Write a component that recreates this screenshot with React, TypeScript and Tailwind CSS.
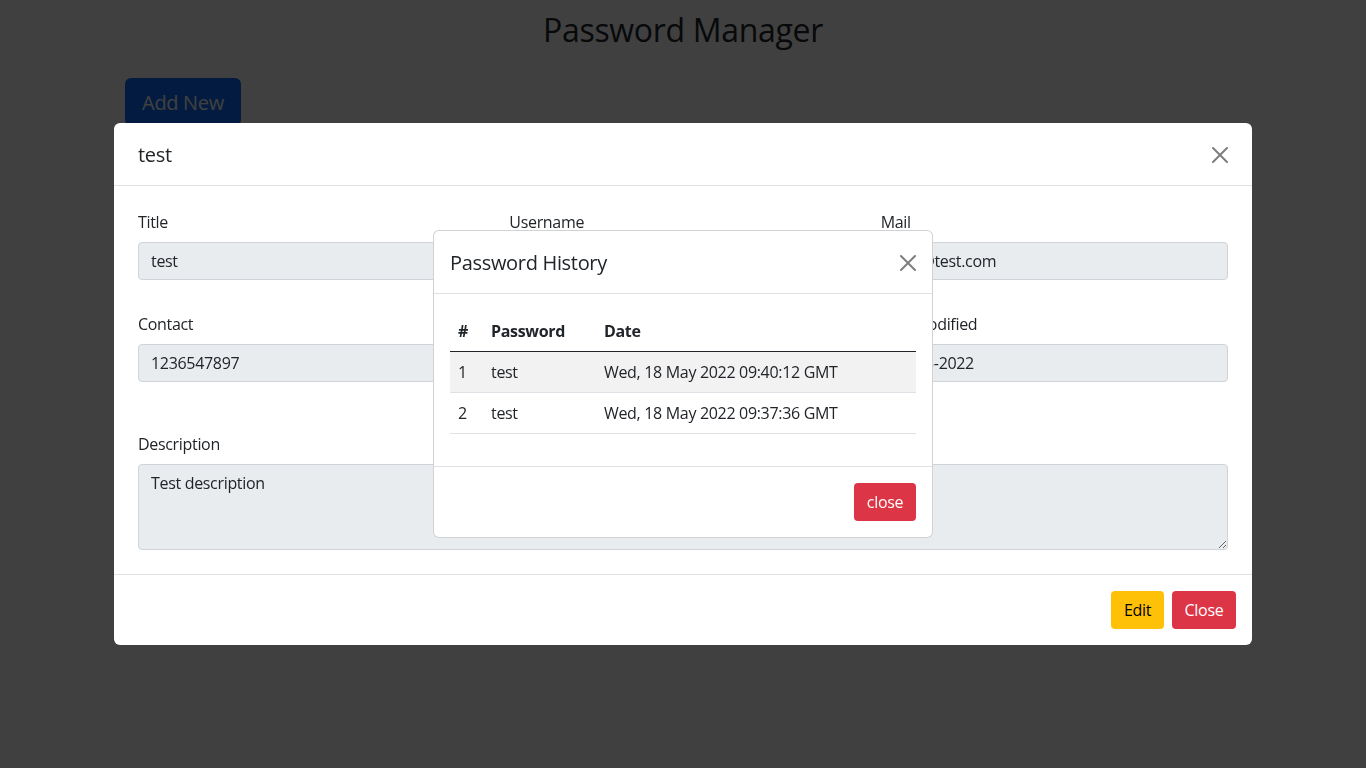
import { useState } from 'react';

const FONT = "font-['Open_Sans','Noto_Sans',sans-serif]";

interface Field {
  label: string;
  value: string;
  type?: string;
}

const FIELD_ROWS: Field[][] = [
  [
    { label: 'Title', value: 'test' },
    { label: 'Username', value: 'test' },
    { label: 'Mail', value: 'test@test.com' },
  ],
  [
    { label: 'Contact', value: '1236547897' },
    { label: 'Password', value: 'test', type: 'password' },
    { label: 'Last Modified', value: '18-05-2022' },
  ],
];

const HISTORY = [
  { id: 1, password: 'test', date: 'Wed, 18 May 2022 09:40:12 GMT' },
  { id: 2, password: 'test', date: 'Wed, 18 May 2022 09:37:36 GMT' },
];

function CloseIcon() {
  return (
    <svg width="16" height="16" viewBox="0 0 16 16" className="opacity-50" fill="#000">
      <path d="M.293.293a1 1 0 0 1 1.414 0L8 6.586 14.293.293a1 1 0 1 1 1.414 1.414L9.414 8l6.293 6.293a1 1 0 0 1-1.414 1.414L8 9.414l-6.293 6.293a1 1 0 0 1-1.414-1.414L6.586 8 .293 1.707a1 1 0 0 1 0-1.414z" />
    </svg>
  );
}

function ReadOnlyInput({ value, type = 'text' }: { value: string; type?: string }) {
  return (
    <input
      readOnly
      type={type}
      value={value}
      className="block w-full h-[38px] px-3 rounded border border-[#ced4da] bg-[#e9ecef] text-base text-[#212529] tracking-[-0.02em] outline-none"
    />
  );
}

export default function App() {
  const [showHistory] = useState(true);

  return (
    <div className={`relative min-h-screen bg-white text-[#212529] tracking-[-0.02em] ${FONT}`}>
      <h2 className="pt-[11px] text-center text-[32px] leading-[38px] font-medium">Password Manager</h2>
      <div className="pl-[125px] mt-[29px]">
        <button type="button" className="w-[116px] h-12 rounded-md bg-[#0d6efd] text-white text-xl pt-0.5">
          Add New
        </button>
      </div>

      <div className="fixed inset-0 bg-black/75" />

      <div className="fixed inset-0 flex items-center justify-center">
        <div className="w-[1138px] bg-white rounded-md">
          <div className="h-[63px] pl-6 pr-6 pt-0.5 flex items-center justify-between border-b border-[#dee2e6]">
            <h5 className="text-xl font-medium leading-[30px]">test</h5>
            <button type="button" className="w-4 h-4 flex items-center justify-center">
              <CloseIcon />
            </button>
          </div>

          <div className="px-6 pt-6 pb-6">
            <div className="flex flex-col gap-8">
              {FIELD_ROWS.map((row, rowIndex) => (
                <div key={rowIndex} className="grid grid-cols-3 gap-x-6">
                  {row.map((field) => (
                    <div key={field.label}>
                      <label className="block mb-2 leading-6">{field.label}</label>
                      <ReadOnlyInput value={field.value} type={field.type} />
                    </div>
                  ))}
                </div>
              ))}
            </div>
            <div className="mt-[50px]">
              <label className="block mb-2 leading-6">Description</label>
              <textarea
                readOnly
                rows={3}
                defaultValue="Test description"
                className="block w-full h-[86px] px-3 py-1.5 rounded border border-[#ced4da] bg-[#e9ecef] text-base leading-6 tracking-[-0.02em] text-[#212529] outline-none resize-y"
              />
            </div>
          </div>

          <div className="border-t border-[#dee2e6] py-4 pr-4 flex justify-end gap-2">
            <button type="button" className="w-[53px] h-[38px] rounded bg-[#ffc107] text-black">
              Edit
            </button>
            <button type="button" className="w-[64px] h-[38px] rounded bg-[#dc3545] text-white">
              Close
            </button>
          </div>
        </div>
      </div>

      {showHistory && (
        <div className="fixed inset-0 flex items-center justify-center">
          <div className="w-[500px] bg-white rounded-md border border-black/[0.175]">
            <div className="h-[63px] px-4 pt-0.5 flex items-center justify-between border-b border-[#dee2e6]">
              <h5 className="text-xl font-medium leading-[30px]">Password History</h5>
              <button type="button" className="w-4 h-4 flex items-center justify-center">
                <CloseIcon />
              </button>
            </div>

            <div className="p-4">
              <table className="w-full mb-4 border-collapse text-left">
                <thead>
                  <tr className="border-b border-[#212529]">
                    <th className="w-[33px] h-[41px] px-2 font-bold">#</th>
                    <th className="w-[113px] h-[41px] px-2 font-bold">Password</th>
                    <th className="h-[41px] px-2 font-bold">Date</th>
                  </tr>
                </thead>
                <tbody>
                  {HISTORY.map((entry, index) => (
                    <tr
                      key={entry.id}
                      className={`border-b border-[#dee2e6]${index % 2 === 0 ? ' bg-[#f2f2f2]' : ''}`}
                    >
                      <td className="h-[41px] px-2">{entry.id}</td>
                      <td className="h-[41px] px-2">{entry.password}</td>
                      <td className="h-[41px] px-2">{entry.date}</td>
                    </tr>
                  ))}
                </tbody>
              </table>
            </div>

            <div className="border-t border-[#dee2e6] py-4 pr-4 flex justify-end">
              <button type="button" className="w-[62px] h-[38px] rounded bg-[#dc3545] text-white">
                close
              </button>
            </div>
          </div>
        </div>
      )}
    </div>
  );
}
